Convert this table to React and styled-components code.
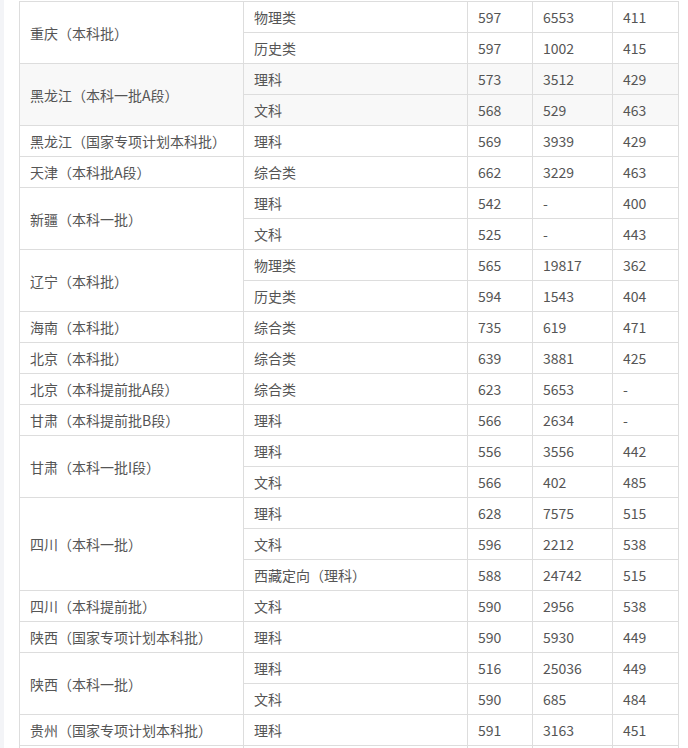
import React from 'react'
import styled, { createGlobalStyle } from 'styled-components'

const GlobalStyle = createGlobalStyle`
    html, body {
        margin: 0;
        padding: 0;
        background: #fff;
    }
    body {
        font-family: "Noto Sans CJK SC", "Microsoft YaHei", sans-serif;
    }
`

const columnWidths = [224, 224, 65, 80, 66]

const groups = [
    { name: '重庆（本科批）', rows: [['物理类', '597', '6553', '411'], ['历史类', '597', '1002', '415']] },
    { name: '黑龙江（本科一批A段）', shaded: true, rows: [['理科', '573', '3512', '429'], ['文科', '568', '529', '463']] },
    { name: '黑龙江（国家专项计划本科批）', rows: [['理科', '569', '3939', '429']] },
    { name: '天津（本科批A段）', rows: [['综合类', '662', '3229', '463']] },
    { name: '新疆（本科一批）', rows: [['理科', '542', '-', '400'], ['文科', '525', '-', '443']] },
    { name: '辽宁（本科批）', rows: [['物理类', '565', '19817', '362'], ['历史类', '594', '1543', '404']] },
    { name: '海南（本科批）', rows: [['综合类', '735', '619', '471']] },
    { name: '北京（本科批）', rows: [['综合类', '639', '3881', '425']] },
    { name: '北京（本科提前批A段）', rows: [['综合类', '623', '5653', '-']] },
    { name: '甘肃（本科提前批B段）', rows: [['理科', '566', '2634', '-']] },
    { name: '甘肃（本科一批I段）', rows: [['理科', '556', '3556', '442'], ['文科', '566', '402', '485']] },
    { name: '四川（本科一批）', rows: [['理科', '628', '7575', '515'], ['文科', '596', '2212', '538'], ['西藏定向（理科）', '588', '24742', '515']] },
    { name: '四川（本科提前批）', rows: [['文科', '590', '2956', '538']] },
    { name: '陕西（国家专项计划本科批）', rows: [['理科', '590', '5930', '449']] },
    { name: '陕西（本科一批）', rows: [['理科', '516', '25036', '449'], ['文科', '590', '685', '484']] },
    { name: '贵州（国家专项计划本科批）', rows: [['理科', '591', '3163', '451']] },
    { name: '', rows: [['', '', '', '']] },
]

export default function App() {
    return (
        <>
            <GlobalStyle />
            <Page>
                <SideStrip />
                <Content>
                    <ScoreTable>
                        <colgroup>
                            {columnWidths.map((w, i) => (
                                <Col key={i} $width={w} />
                            ))}
                        </colgroup>
                        <tbody>
                            {groups.map((group, gi) =>
                                group.rows.map((row, ri) => (
                                    <Row key={gi + '-' + ri} $shaded={group.shaded}>
                                        {ri === 0 && <Cell rowSpan={group.rows.length}>{group.name}</Cell>}
                                        {row.map((value, ci) => (
                                            <Cell key={ci}>{value}</Cell>
                                        ))}
                                    </Row>
                                ))
                            )}
                        </tbody>
                    </ScoreTable>
                </Content>
            </Page>
        </>
    )
}

const Page = styled.div`
    display: flex;
    height: 748px;
    overflow: hidden;
`

const SideStrip = styled.div`
    width: 4px;
    flex-shrink: 0;
    background: #f3f4f7;
`

const Content = styled.div`
    padding-left: 15px;
    padding-top: 1px;
`

const ScoreTable = styled.table`
    border-collapse: collapse;
    table-layout: fixed;
    width: 659px;
    color: #555;
    font-size: 14px;
`

const Col = styled.col`
    width: ${props => props.$width}px;
`

const Row = styled.tr`
    background: ${props => (props.$shaded ? '#f8f8f8' : '#fff')};
`

const Cell = styled.td`
    border: 1px solid #dddddd;
    height: 31px;
    padding: 0 10px;
    line-height: 20px;
    vertical-align: middle;
    white-space: nowrap;
    box-sizing: border-box;
`
